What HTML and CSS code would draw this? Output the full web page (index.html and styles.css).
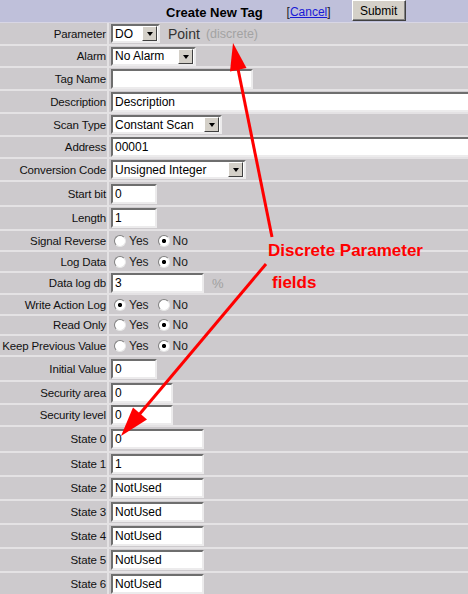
FILE: index.html
```html
<!DOCTYPE html>
<html>
<head>
<meta charset="utf-8">
<title>Create New Tag</title>
<link rel="stylesheet" href="styles.css">
</head>
<body>
<div class="page">
  <div class="head">
    <span class="title">Create New Tag</span>
    <span class="cancel">[<a href="#">Cancel</a>]</span>
    <button class="btn">Submit</button>
  </div>

  <div class="row h23"><div class="lbl">Parameter</div><div class="fld">
    <span class="sel w49"><span class="sel-val">DO</span><span class="sel-btn"><i></i></span></span>
    <span class="point">Point</span><span class="hint">(discrete)</span>
  </div></div>
  <div class="row h22"><div class="lbl">Alarm</div><div class="fld">
    <span class="sel w85"><span class="sel-val">No Alarm</span><span class="sel-btn"><i></i></span></span>
  </div></div>
  <div class="row h23"><div class="lbl">Tag Name</div><div class="fld"><input class="inp w142" value=""></div></div>
  <div class="row h23"><div class="lbl">Description</div><div class="fld"><input class="inp wfull" value="Description"></div></div>
  <div class="row h23"><div class="lbl">Scan Type</div><div class="fld">
    <span class="sel w110"><span class="sel-val">Constant Scan</span><span class="sel-btn"><i></i></span></span>
  </div></div>
  <div class="row h22"><div class="lbl">Address</div><div class="fld"><input class="inp wfull" value="00001"></div></div>
  <div class="row h23"><div class="lbl">Conversion Code</div><div class="fld">
    <span class="sel w134"><span class="sel-val">Unsigned Integer</span><span class="sel-btn"><i></i></span></span>
  </div></div>
  <div class="row h25"><div class="lbl">Start bit</div><div class="fld"><input class="inp w45" value="0"></div></div>
  <div class="row h24"><div class="lbl">Length</div><div class="fld"><input class="inp w45" value="1"></div></div>
  <div class="row h21"><div class="lbl">Signal Reverse</div><div class="fld">
    <label class="opt"><input type="radio" class="rad" name="sr">Yes</label>
    <label class="opt"><input type="radio" class="rad" name="sr" checked>No</label>
  </div></div>
  <div class="row h21"><div class="lbl">Log Data</div><div class="fld">
    <label class="opt"><input type="radio" class="rad" name="ld">Yes</label>
    <label class="opt"><input type="radio" class="rad" name="ld" checked>No</label>
  </div></div>
  <div class="row h22"><div class="lbl">Data log db</div><div class="fld"><input class="inp w93" value="3"><span class="pct">%</span></div></div>
  <div class="row h21"><div class="lbl">Write Action Log</div><div class="fld">
    <label class="opt"><input type="radio" class="rad" name="wa" checked>Yes</label>
    <label class="opt"><input type="radio" class="rad" name="wa">No</label>
  </div></div>
  <div class="row h20"><div class="lbl">Read Only</div><div class="fld">
    <label class="opt"><input type="radio" class="rad" name="ro">Yes</label>
    <label class="opt"><input type="radio" class="rad" name="ro" checked>No</label>
  </div></div>
  <div class="row h21"><div class="lbl">Keep Previous Value</div><div class="fld">
    <label class="opt"><input type="radio" class="rad" name="kp">Yes</label>
    <label class="opt"><input type="radio" class="rad" name="kp" checked>No</label>
  </div></div>
  <div class="row h25"><div class="lbl">Initial Value</div><div class="fld"><input class="inp w45" value="0"></div></div>
  <div class="row h23"><div class="lbl">Security area</div><div class="fld"><input class="inp w62" value="0"></div></div>
  <div class="row h22"><div class="lbl">Security level</div><div class="fld"><input class="inp w62" value="0"></div></div>
  <div class="row h26"><div class="lbl">State 0</div><div class="fld"><input class="inp w93" value="0"></div></div>
  <div class="row h24"><div class="lbl">State 1</div><div class="fld"><input class="inp w93" value="1"></div></div>
  <div class="row h24"><div class="lbl">State 2</div><div class="fld"><input class="inp w93" value="NotUsed"></div></div>
  <div class="row h24"><div class="lbl">State 3</div><div class="fld"><input class="inp w93" value="NotUsed"></div></div>
  <div class="row h24"><div class="lbl">State 4</div><div class="fld"><input class="inp w93" value="NotUsed"></div></div>
  <div class="row h24"><div class="lbl">State 5</div><div class="fld"><input class="inp w93" value="NotUsed"></div></div>
  <div class="row h24"><div class="lbl">State 6</div><div class="fld"><input class="inp w93" value="NotUsed"></div></div>

  <svg class="ann" width="468" height="594" viewBox="0 0 468 594">
    <line x1="272" y1="237" x2="237" y2="64" stroke="#ff0000" stroke-width="3"/>
    <polygon points="233,43 246.5,68 230,71.5" fill="#ff0000"/>
    <line x1="266" y1="264" x2="138" y2="416" stroke="#ff0000" stroke-width="3"/>
    <polygon points="121,436 133,407.5 147,419.5" fill="#ff0000"/>
  </svg>
  <div class="note n1">Discrete Parameter</div>
  <div class="note n2">fields</div>
</div>
</body>
</html>
```

FILE: styles.css
```css
html, body {
  margin: 0;
  padding: 0;
  background: #cdcacd;
  overflow: hidden;
}
body {
  font-family: "Liberation Sans", Arial, sans-serif;
  font-size: 11.5px;
  color: #111;
}
.page {
  position: relative;
  width: 468px;
  height: 594px;
  overflow: hidden;
}
.head {
  height: 23px;
  box-sizing: border-box;
  background: #bfc0da;
  display: flex;
  align-items: center;
  padding-left: 166px;
  border-bottom: 1px solid #d8d6e4;
}
.title {
  font-weight: bold;
  font-size: 13px;
  color: #000;
  margin-right: 24px;
  margin-top: 2px;
}
.cancel {
  font-size: 12px;
  color: #222;
  margin-right: 21px;
  margin-top: 2px;
}
.cancel a {
  color: #1a1ad6;
  text-decoration: underline;
}
.btn {
  width: 54px;
  height: 21px;
  margin-top: -1px;
  padding: 0;
  font-family: "Liberation Sans", Arial, sans-serif;
  font-size: 12px;
  color: #000;
  background: #d4d0c8;
  border: 1px solid;
  border-color: #ffffff #404040 #404040 #ffffff;
  box-shadow: inset -1px -1px 0 #808080;
}
.row {
  display: grid;
  grid-template-columns: 109px 1fr;
  box-sizing: border-box;
  border-bottom: 2px solid #e4e2e4;
}
.h20 { height: 20px; }
.h21 { height: 21px; }
.h22 { height: 22px; }
.h23 { height: 23px; }
.h24 { height: 24px; }
.h25 { height: 25px; }
.h26 { height: 26px; }
.lbl {
  display: flex;
  align-items: center;
  justify-content: flex-end;
  white-space: nowrap;
  padding-right: 1px;
  letter-spacing: -0.15px;
  border-right: 2px solid #e4e2e4;
}
.fld {
  display: flex;
  align-items: center;
  padding-left: 2px;
  white-space: nowrap;
}
.inp {
  height: 20px;
  box-sizing: border-box;
  margin: 0;
  padding: 0 2px;
  font-family: "Liberation Sans", Arial, sans-serif;
  font-size: 12px;
  color: #000;
  background: #fff;
  border: 2px solid;
  border-color: #6e6e6e #ecebec #ecebec #6e6e6e;
  outline: none;
}
.w45 { width: 46px; }
.w62 { width: 62px; }
.w93 { width: 93px; }
.w142 { width: 142px; }
.wfull { width: 380px; flex: none; }
.sel {
  display: inline-flex;
  align-items: center;
  height: 19px;
  box-sizing: border-box;
  background: #fff;
  border: 2px solid;
  border-color: #6e6e6e #ecebec #ecebec #6e6e6e;
  font-size: 12px;
  color: #000;
}
.w49 { width: 49px; }
.w85 { width: 85px; }
.w110 { width: 111px; }
.w134 { width: 135px; }
.sel-val {
  flex: 1;
  padding-left: 2px;
  overflow: hidden;
}
.sel-btn {
  width: 13px;
  height: 13px;
  margin-right: 1px;
  background: #d4d0c8;
  border: 1px solid;
  border-color: #ffffff #404040 #404040 #ffffff;
  display: flex;
  align-items: center;
  justify-content: center;
}
.sel-btn i {
  width: 0;
  height: 0;
  border-left: 3.5px solid transparent;
  border-right: 3.5px solid transparent;
  border-top: 4px solid #000;
  margin-top: 1px;
}
.point {
  font-size: 14px;
  color: #333;
  margin-left: 8px;
}
.hint {
  font-size: 12.5px;
  color: #a3a3a3;
  margin-left: 6px;
}
.pct {
  font-size: 13px;
  color: #a0a0a0;
  margin-left: 8px;
}
.opt {
  display: inline-flex;
  align-items: center;
  font-size: 12px;
  color: #222;
  margin-right: 9px;
}
.opt:first-child { margin-left: 3px; }
.rad {
  -webkit-appearance: none;
  appearance: none;
  width: 12px;
  height: 12px;
  margin: 0 3px 0 0;
  border-radius: 50%;
  border: 1px solid;
  border-color: #808080 #e8e8e8 #e8e8e8 #808080;
  background: #fff;
  box-sizing: border-box;
}
.rad:checked {
  background: radial-gradient(circle, #000 0 1.8px, #fff 2.4px);
}
.ann {
  position: absolute;
  left: 0;
  top: 0;
  pointer-events: none;
}
.note {
  position: absolute;
  font-family: "Liberation Sans", Arial, sans-serif;
  font-weight: bold;
  font-size: 17px;
  color: #ff0000;
  line-height: 1;
  white-space: nowrap;
}
.n1 { left: 268px; top: 242px; }
.n2 { left: 272px; top: 274px; }
```
